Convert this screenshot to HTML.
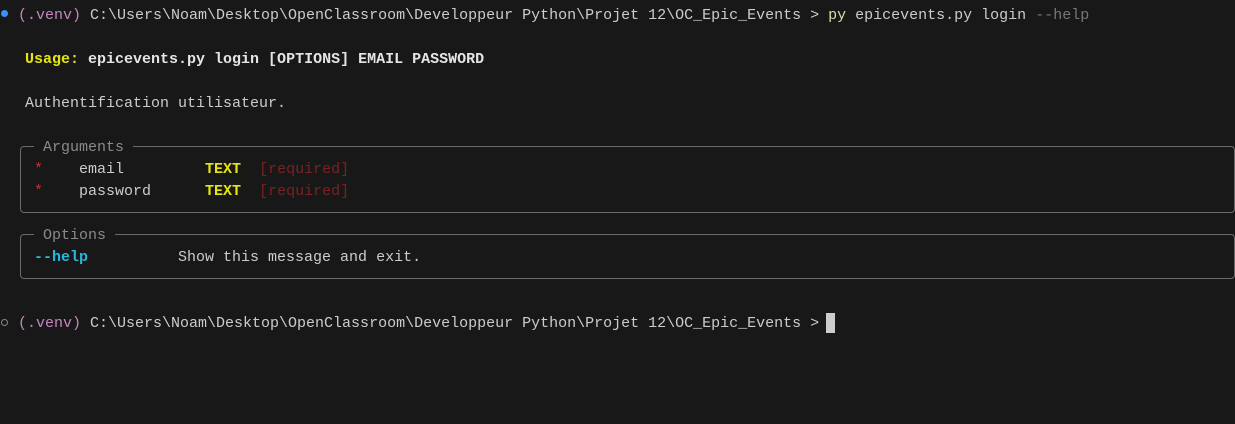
<!DOCTYPE html>
<html><head><meta charset="utf-8"><style>
body{margin:0;width:1235px;height:424px;background:#181818;overflow:hidden;position:relative;font-family:"Liberation Mono",monospace;font-size:15px;color:#cccccc}
.l{position:absolute;white-space:pre;line-height:22px;height:22px}
.p{color:#c586c0}.y{color:#e5e510;font-weight:bold}.b{font-weight:bold;color:#e5e5e5}
.r{color:#cd3131}.dr{color:#7a2222}.c{color:#29b8db;font-weight:bold}.g{color:#767676}
.box{position:absolute;border:1px solid #6b6b6b;border-radius:4px}
.lab{position:absolute;background:#181818;padding:0 9px;color:#8a8a8a;white-space:pre;line-height:22px}
.dot{position:absolute;width:7px;height:7px;border-radius:50%}
</style></head><body>
<div class="dot" style="left:1px;top:10px;background:#3794ff"></div>
<div class="l" style="left:18px;top:5px"><span class="p">(.venv)</span> C:\Users\Noam\Desktop\OpenClassroom\Developpeur Python\Projet 12\OC_Epic_Events &gt; <span style="color:#dcdcaa">py</span> epicevents.py login <span class="g">--help</span></div>
<div class="l" style="left:25px;top:49px"><span class="y">Usage:</span> <span class="b">epicevents.py login [OPTIONS] EMAIL PASSWORD</span></div>
<div class="l" style="left:25px;top:93px">Authentification utilisateur.</div>
<div class="box" style="left:20px;top:146px;width:1213px;height:65px"></div>
<div class="lab" style="left:34px;top:137px">Arguments</div>
<div class="l" style="left:34px;top:159px"><span class="r">*</span>    email         <span class="y">TEXT</span>  <span class="dr">[required]</span></div>
<div class="l" style="left:34px;top:181px"><span class="r">*</span>    password      <span class="y">TEXT</span>  <span class="dr">[required]</span></div>
<div class="box" style="left:20px;top:234px;width:1213px;height:43px"></div>
<div class="lab" style="left:34px;top:225px">Options</div>
<div class="l" style="left:34px;top:247px"><span class="c">--help</span>          Show this message and exit.</div>
<div class="dot" style="left:1px;top:319px;width:5px;height:5px;border:1px solid #888;background:none"></div>
<div class="l" style="left:18px;top:313px"><span class="p">(.venv)</span> C:\Users\Noam\Desktop\OpenClassroom\Developpeur Python\Projet 12\OC_Epic_Events &gt; </div>
<div style="position:absolute;left:826px;top:313px;width:9px;height:20px;background:#cccccc"></div>
</body></html>
